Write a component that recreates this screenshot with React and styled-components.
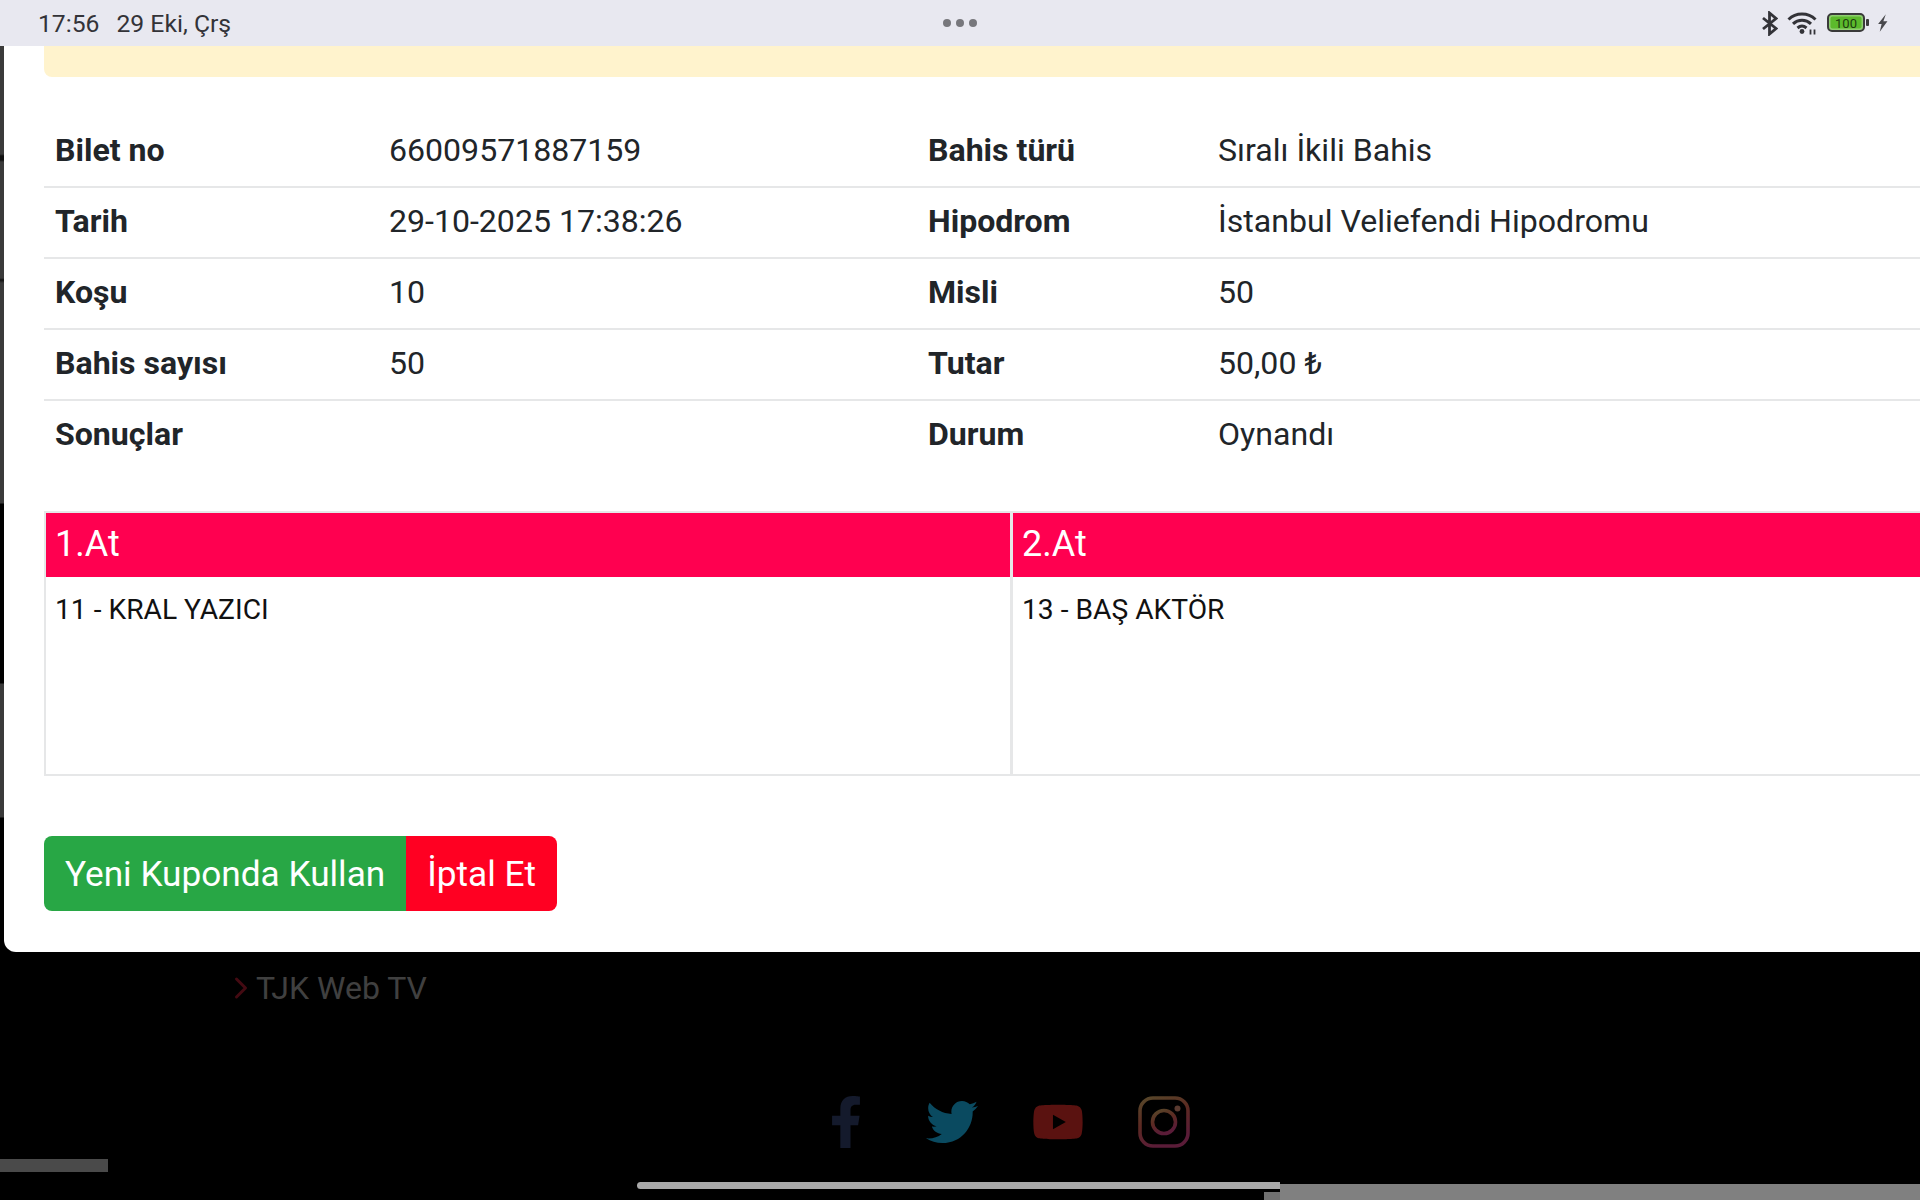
import React from 'react'
import styled, { createGlobalStyle } from 'styled-components'
import { FaFacebookF, FaTwitter, FaYoutube } from 'react-icons/fa'
import { FiChevronRight } from 'react-icons/fi'

const Global = createGlobalStyle`
  html, body { margin: 0; padding: 0; background: #000; }
  body { font-family: Roboto, "Liberation Sans", sans-serif; }
  * { box-sizing: border-box; }
`

const Screen = styled.div`
  position: relative;
  width: 1920px;
  height: 1200px;
  overflow: hidden;
  background: #000;
`

const StatusBar = styled.div`
  height: 46px;
  background: #e8e8f0;
  display: grid;
  grid-template-columns: 1fr auto 1fr;
  align-items: center;
  padding: 0 38px;
  color: #333338;
  font-size: 24.7px;
`

const StatusLeft = styled.div`
  display: flex;
  gap: 17px;
`

const Dots = styled.div`
  display: flex;
  gap: 5px;
`

const Dot = styled.span`
  width: 8px;
  height: 8px;
  border-radius: 50%;
  background: #77777c;
`

const StatusRight = styled.div`
  display: flex;
  justify-content: flex-end;
  align-items: center;
  gap: 8px;
  margin-right: -6px;
`

const Stage = styled.div`
  display: flex;
  height: 906px;
`

const Strip = styled.div`
  width: 4px;
  background: linear-gradient(
    #3a3a3a 0,
    #3a3a3a 108px,
    #111 110px,
    #111 114px,
    #3a3a3a 116px,
    #3a3a3a 232px,
    #111 234px,
    #3a3a3a 237px,
    #3a3a3a 457px,
    #000 458px,
    #000 637px,
    #3a3a3a 638px,
    #3a3a3a 771px,
    #000 772px
  );
`

const Modal = styled.div`
  flex: 1;
  min-width: 0;
  background: #fff;
  border-bottom-left-radius: 12px;
  padding: 0 0 40px 40px;
  color: #212529;
`

const Alert = styled.div`
  height: 31px;
  background: #fff3cd;
  border-bottom-left-radius: 8px;
`

const InfoTable = styled.div`
  margin-top: 40px;
  display: flex;
  flex-direction: column;
`

const InfoRow = styled.div`
  display: grid;
  grid-template-columns: 334px 539px 290px 1fr;
  height: 71px;
  align-items: center;
  font-size: 32.1px;
  padding: 0 0 4px 11px;
  border-bottom: 2px solid ${(p) => (p.$last ? 'transparent' : '#e6e7e8')};
`

const Label = styled.div`
  font-weight: 700;
`

const Value = styled.div`
  font-weight: 400;
  white-space: nowrap;
`

const HorseTable = styled.div`
  margin-top: 39px;
  display: grid;
  grid-template-columns: 964px 1fr;
  height: 265px;
  border: 2px solid #e6e7e8;
  border-right: none;
`

const HorseCol = styled.div`
  border-left: ${(p) => (p.$second ? '3px solid #e6e7e8' : 'none')};
`

const HorseHead = styled.div`
  height: 64px;
  background: #ff0050;
  color: #fff;
  font-size: 36px;
  display: flex;
  align-items: center;
  padding: 0 0 2px 9px;
`

const HorseName = styled.div`
  color: #111;
  font-size: 28.2px;
  padding: 16px 9px 0;
  line-height: 33px;
`

const Buttons = styled.div`
  margin-top: 60px;
  display: flex;
`

const Btn = styled.div`
  height: 75px;
  display: flex;
  align-items: center;
  padding: 0 21px;
  color: #fff;
  font-size: 35.2px;
  background: ${(p) => p.$bg};
  border-radius: ${(p) => p.$radius};
`

const Footer = styled.div`
  height: 248px;
  background: #000;
  display: flex;
  flex-direction: column;
`

const FooterLink = styled.div`
  display: flex;
  align-items: center;
  margin-top: 15px;
  padding-left: 223px;
  color: #404040;
  font-size: 32px;
  height: 42px;
`

const Chevron = styled(FiChevronRight)`
  margin-right: -3px;
  color: #440a12;
`

const Socials = styled.div`
  margin-top: 87px;
  display: flex;
  justify-content: center;
  padding-left: 90px;
  gap: 54px;
  align-items: center;
`

const Social = styled.div`
  width: 52px;
  height: 52px;
  display: flex;
  align-items: center;
  justify-content: center;
  color: ${(p) => p.$color};
  font-size: ${(p) => p.$size};
`

const LeftScrap = styled.div`
  position: absolute;
  left: 0;
  top: 1159px;
  width: 108px;
  height: 13px;
  background: #4a4a4a;
`

const GestureBlock = styled.div`
  position: absolute;
  left: 1280px;
  right: 0;
  top: 1184px;
  bottom: 0;
  background: #808080;
`

const GestureNotch = styled.div`
  position: absolute;
  left: 1264px;
  width: 16px;
  top: 1192px;
  bottom: 0;
  background: #707070;
`

const HomeBar = styled.div`
  position: absolute;
  left: 637px;
  top: 1182px;
  width: 643px;
  height: 7px;
  background: #a9a9a9;
  border-radius: 4px 0 0 4px;
`

const Bluetooth = () => (
  <svg width="17" height="25" viewBox="0 0 17 25" fill="none" stroke="#333338" strokeWidth="2.8" style={{ marginRight: 1 }}>
    <path d="M2 7 15 17.5 8.5 23V2L15 7.5 2 18" />
  </svg>
)

const Wifi = () => (
  <svg width="32" height="24" viewBox="0 0 32 24" fill="none" stroke="#333338" strokeWidth="3">
    <path d="M1.5 8.5C9 1.2 21 1.2 28.5 8.5" />
    <path d="M6 12.8C11.2 8 18.8 8 24 12.8" />
    <path d="M10.5 17C13.5 14.4 16.5 14.4 19.5 17" />
    <circle cx="15" cy="20.5" r="2.4" fill="#333338" stroke="none" />
    <path d="M23.5 23.5v-5M27.5 23.5v-5" strokeWidth="1.8" />
  </svg>
)

const Battery = () => (
  <svg width="42" height="20" viewBox="0 0 42 20">
    <rect x="1" y="1" width="36" height="17" rx="4" fill="#8fce70" stroke="#3a3a3a" strokeWidth="2" />
    <rect x="3.5" y="3.5" width="31" height="12" rx="2" fill="#5cba2c" />
    <text x="19" y="14.5" fontSize="13" textAnchor="middle" fill="#1d3a10" fontFamily="Roboto, sans-serif">100</text>
    <rect x="39" y="6" width="3" height="7" rx="1" fill="#3a3a3a" />
  </svg>
)

const Bolt = () => (
  <svg width="11" height="18" viewBox="0 0 10 16">
    <path d="M8 0 1 9h3.2L2.5 16 9.5 6.5H5.8z" fill="#48484c" />
  </svg>
)

const Instagram = () => (
  <svg width="52" height="52" viewBox="0 0 52 52" fill="none" strokeWidth="3.6">
    <defs>
      <linearGradient id="igDim" x1="0" y1="0" x2="0.4" y2="1">
        <stop offset="0" stopColor="#57482a" />
        <stop offset="0.5" stopColor="#5c2a22" />
        <stop offset="1" stopColor="#5a1c38" />
      </linearGradient>
    </defs>
    <rect x="2" y="2" width="48" height="48" rx="13" stroke="url(#igDim)" />
    <circle cx="26" cy="26" r="11.5" stroke="url(#igDim)" />
    <circle cx="39.5" cy="12.5" r="3" fill="#5a3a30" />
  </svg>
)

const rows = [
  ['Bilet no', '66009571887159', 'Bahis türü', 'Sıralı İkili Bahis'],
  ['Tarih', '29-10-2025 17:38:26', 'Hipodrom', 'İstanbul Veliefendi Hipodromu'],
  ['Koşu', '10', 'Misli', '50'],
  ['Bahis sayısı', '50', 'Tutar', '50,00 ₺'],
  ['Sonuçlar', '', 'Durum', 'Oynandı'],
]

const App = () => {
  return (
    <Screen>
      <Global />
      <StatusBar>
        <StatusLeft>
          <span>17:56</span>
          <span>29 Eki, Çrş</span>
        </StatusLeft>
        <Dots>
          <Dot />
          <Dot />
          <Dot />
        </Dots>
        <StatusRight>
          <Bluetooth />
          <Wifi />
          <Battery />
          <Bolt />
        </StatusRight>
      </StatusBar>
      <Stage>
        <Strip />
        <Modal>
          <Alert />
          <InfoTable>
            {rows.map((r, i) => (
              <InfoRow key={r[0]} $last={i === rows.length - 1}>
                <Label>{r[0]}</Label>
                <Value>{r[1]}</Value>
                <Label>{r[2]}</Label>
                <Value>{r[3]}</Value>
              </InfoRow>
            ))}
          </InfoTable>
          <HorseTable>
            <HorseCol>
              <HorseHead>1.At</HorseHead>
              <HorseName>11 - KRAL YAZICI</HorseName>
            </HorseCol>
            <HorseCol $second>
              <HorseHead>2.At</HorseHead>
              <HorseName>13 - BAŞ AKTÖR</HorseName>
            </HorseCol>
          </HorseTable>
          <Buttons>
            <Btn $bg="#28a745" $radius="8px 0 0 8px">Yeni Kuponda Kullan</Btn>
            <Btn $bg="#ff0022" $radius="0 8px 8px 0">İptal Et</Btn>
          </Buttons>
        </Modal>
      </Stage>
      <Footer>
        <FooterLink>
          <Chevron size={36} />
          <span>TJK Web TV</span>
        </FooterLink>
        <Socials>
          <Social $color="#141a2c" $size="52px"><FaFacebookF /></Social>
          <Social $color="#0a4a60" $size="52px"><FaTwitter /></Social>
          <Social $color="#5a1210" $size="58px"><FaYoutube /></Social>
          <Social><Instagram /></Social>
        </Socials>
      </Footer>
      <LeftScrap />
      <GestureNotch />
      <GestureBlock />
      <HomeBar />
    </Screen>
  )
}

export default App
